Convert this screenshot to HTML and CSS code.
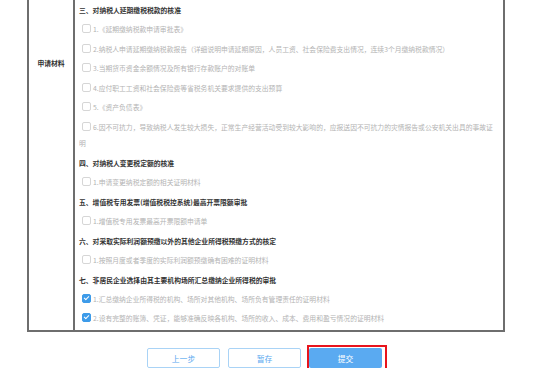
FILE: index.html
```html
<!DOCTYPE html>
<html lang="zh-CN">
<head>
    <meta charset="UTF-8">
    <title>申请材料</title>
    <link rel="stylesheet" href="styles.css">
</head>
<body>
    <div class="form-table">
        <div class="label-cell">申请材料</div>
        <div class="content-cell">
            <div class="section-title">三、对纳税人延期缴税税款的核准</div>
            <div class="item"><span class="box"></span>1.《延期缴纳税款申请审批表》</div>
            <div class="item"><span class="box"></span>2.纳税人申请延期缴纳税款报告（详细说明申请延期原因，人员工资、社会保险费支出情况，连续3个月缴纳税款情况）</div>
            <div class="item"><span class="box"></span>3.当期货币资金余额情况及所有银行存款账户的对账单</div>
            <div class="item"><span class="box"></span>4.应付职工工资和社会保险费等省税务机关要求提供的支出预算</div>
            <div class="item"><span class="box"></span>5.《资产负债表》</div>
            <div class="item"><span class="box"></span>6.因不可抗力，导致纳税人发生较大损失，正常生产经营活动受到较大影响的，应报送因不可抗力的灾情报告或公安机关出具的事故证明</div>

            <div class="section-title">四、对纳税人变更税定额的核准</div>
            <div class="item"><span class="box"></span>1.申请变更纳税定额的相关证明材料</div>

            <div class="section-title">五、增值税专用发票(增值税税控系统)最高开票限额审批</div>
            <div class="item"><span class="box"></span>1.增值税专用发票最高开票限额申请单</div>

            <div class="section-title">六、对采取实际利润额预缴以外的其他企业所得税预缴方式的核定</div>
            <div class="item"><span class="box"></span>1.按照月度或者季度的实际利润额预缴确有困难的证明材料</div>

            <div class="section-title">七、非居民企业选择由其主要机构场所汇总缴纳企业所得税的审批</div>
            <div class="item"><span class="box checked"></span>1.汇总缴纳企业所得税的机构、场所对其他机构、场所负有管理责任的证明材料</div>
            <div class="item"><span class="box checked"></span>2.设有完整的账簿、凭证，能够准确反映各机构、场所的收入、成本、费用和盈亏情况的证明材料</div>
        </div>
    </div>

    <div class="actions">
        <button class="btn btn-plain">上一步</button>
        <button class="btn btn-plain">暂存</button>
        <div class="submit-wrap">
            <button class="btn btn-primary">提交</button>
            <div class="highlight"></div>
        </div>
    </div>
</body>
</html>
```

FILE: styles.css
```css
body {
    margin: 0;
    padding: 0;
    background: #ffffff;
    font-family: "Noto Sans CJK SC", "Liberation Sans", sans-serif;
    font-size: 6.8px;
}
.form-table {
    display: flex;
    width: 478px;
    margin-left: 27px;
    border-left: 2px solid #6e6e6e;
    border-right: 2px solid #6e6e6e;
    border-bottom: 2px solid #6e6e6e;
    box-sizing: border-box;
}
.label-cell {
    width: 46px;
    flex-shrink: 0;
    border-right: 2px solid #6e6e6e;
    text-align: center;
    padding-top: 58px;
    color: #333;
    font-weight: bold;
    box-sizing: border-box;
}
.content-cell {
    flex: 1;
    padding: 0 10px 2px 4px;
}
.section-title {
    line-height: 16px;
    padding: 2px 0 1.5px;
    color: #333;
    font-weight: bold;
}
.item {
    line-height: 16px;
    padding: 1.5px 0 2px;
    color: #b3b3b3;
}
.box {
    display: inline-block;
    width: 7px;
    height: 7px;
    margin: 0 2px 0 3px;
    border: 1px solid #d6d6d6;
    border-radius: 2px;
    vertical-align: -1px;
    position: relative;
}
.box.checked {
    background: #3d9be9;
    border-color: #3d9be9;
}
.box.checked::after {
    content: "";
    position: absolute;
    left: 2px;
    top: 0;
    width: 2px;
    height: 4px;
    border: solid #fff;
    border-width: 0 1.3px 1.3px 0;
    transform: rotate(45deg);
}
.actions {
    display: flex;
    gap: 8px;
    margin: 16px 0 0 147px;
}
.btn {
    width: 73px;
    height: 20px;
    border-radius: 2px;
    font-family: "Noto Sans CJK SC", sans-serif;
    font-size: 7.8px;
    padding: 0;
    cursor: pointer;
}
.btn-plain {
    background: #fff;
    border: 1px solid #a9d3f6;
    color: #5aa9ef;
}
.btn-primary {
    background: #5aaaf1;
    border: none;
    color: #fff;
}
.submit-wrap {
    position: relative;
}
.highlight {
    position: absolute;
    left: -2px;
    top: -3px;
    width: 80px;
    height: 27px;
    border: 2px solid #e8141c;
    box-sizing: border-box;
    pointer-events: none;
}
```
